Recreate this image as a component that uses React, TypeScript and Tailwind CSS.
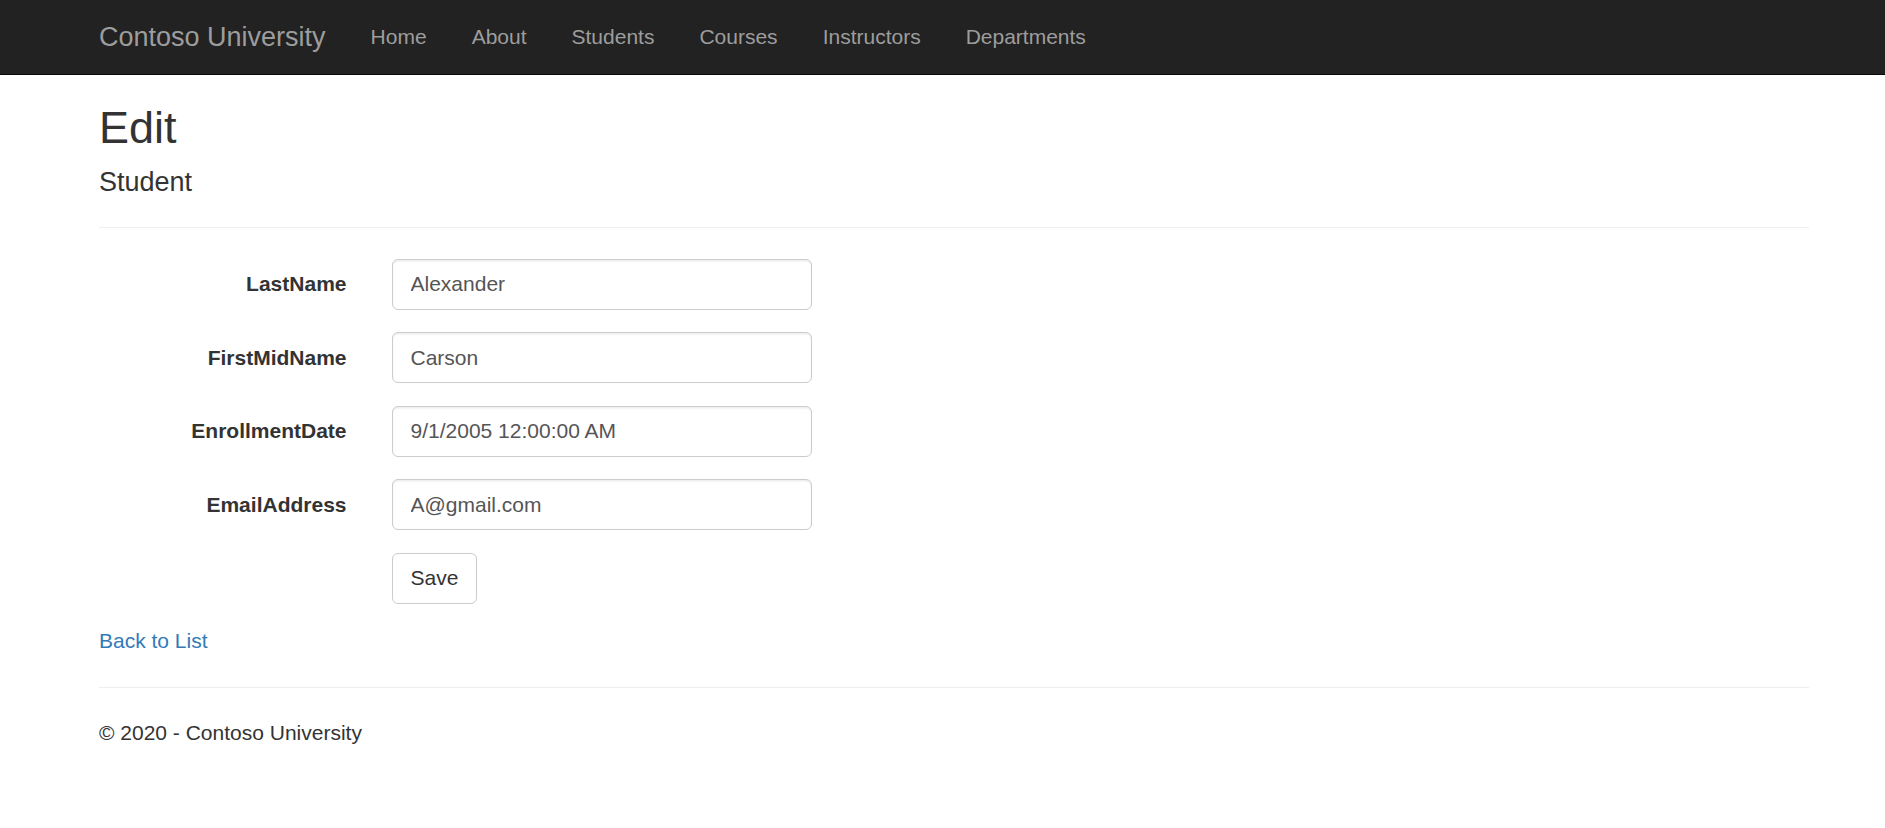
export default function App() {
  const links = ["Home", "About", "Students", "Courses", "Instructors", "Departments"];
  const fields = [
    { label: "LastName", value: "Alexander" },
    { label: "FirstMidName", value: "Carson" },
    { label: "EnrollmentDate", value: "9/1/2005 12:00:00 AM" },
    { label: "EmailAddress", value: "A@gmail.com" },
  ];

  return (
    <div className="min-h-screen bg-white text-[21px] leading-[30px] text-[#333] font-['Liberation_Sans',Arial,sans-serif]">
      {/* Navbar */}
      <nav className="h-[75px] bg-[#222] border-b border-[#080808]">
        <div className="ml-[99px] flex h-[74px] items-center">
          <a className="pr-[22.5px] text-[27px] leading-[30px] text-[#9d9d9d]">Contoso University</a>
          <ul className="flex">
            {links.map((l) => (
              <li key={l}>
                <a className="block px-[22.5px] text-[21px] text-[#9d9d9d]">{l}</a>
              </li>
            ))}
          </ul>
        </div>
      </nav>

      <div className="ml-[99px] w-[1710px]">
        <h2 className="mt-[28px] text-[45px] leading-[49.5px] font-normal">Edit</h2>
        <h4 className="mt-[15.5px] text-[27px] leading-[29.7px] font-normal">Student</h4>
        <hr className="mt-[29px] mb-[31px] border-t border-[#eee]" />

        <form>
          {fields.map((f) => (
            <div key={f.label} className="flex mb-[22.5px]">
              <label className="w-[247.5px] pt-[10.5px] text-right font-bold">{f.label}</label>
              <div className="ml-[45px]">
                <input
                  readOnly
                  value={f.value}
                  className="block w-[420px] h-[51px] px-[18px] py-[9px] rounded-[6px] border-[1.5px] border-[#ccc] text-[#555] shadow-[inset_0_1.5px_1.5px_rgba(0,0,0,0.075)] outline-none"
                />
              </div>
            </div>
          ))}
          <div className="flex mb-[22.5px]">
            <div className="w-[247.5px]" />
            <div className="ml-[45px]">
              <button
                type="button"
                className="h-[51px] px-[18px] py-[9px] rounded-[6px] border-[1.5px] border-[#ccc] bg-white text-[#333]"
              >
                Save
              </button>
            </div>
          </div>
        </form>

        <div>
          <a className="text-[#337ab7]">Back to List</a>
        </div>

        <hr className="mt-[31px] mb-[30px] border-t border-[#eee]" />
        <footer>
          <p>© 2020 - Contoso University</p>
        </footer>
      </div>
    </div>
  );
}
